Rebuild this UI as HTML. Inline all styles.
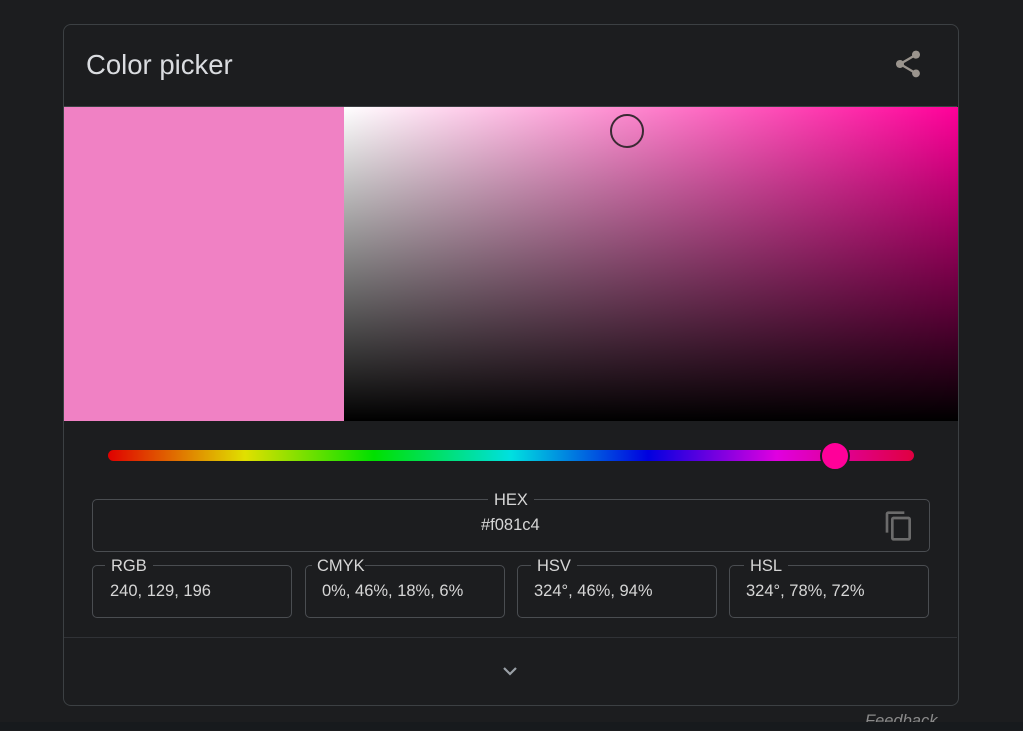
<!DOCTYPE html>
<html><head><style>
body{margin:0;width:1023px;height:730px;background:#1c1d1f;font-family:"Liberation Sans",sans-serif;position:relative;overflow:hidden}
.card{position:absolute;left:63px;top:24px;width:894px;height:680px;border:1px solid #3c4043;border-radius:8px;box-sizing:content-box}
.a{position:absolute}
.box{position:absolute;border:1px solid #4a4d51;border-radius:5px;box-sizing:border-box}
.lbl{position:absolute;top:-9px;background:#1c1d1f;color:#d6d6d6;font-size:16.5px;padding:0 6px;line-height:18px}
.val{position:absolute;color:#d6d6d6;font-size:16.5px}
</style></head><body>
<div class="card"></div>
<div class="a" style="left:86px;top:49px;color:#dadce0;font-size:27.5px">Color picker</div>
<svg class="a" style="left:892px;top:48px" width="32" height="32" viewBox="0 0 24 24"><path fill="#9a948d" d="M18 16.08c-.76 0-1.44.3-1.96.77L8.91 12.7c.05-.23.09-.46.09-.7s-.04-.47-.09-.7l7.05-4.110c.54.5 1.250.81 2.040.81 1.66 0 3-1.34 3-3s-1.34-3-3-3-3 1.34-3 3c0 .24.04.47.09.7L8.04 9.81C7.5 9.31 6.79 9 6 9c-1.66 0-3 1.34-3 3s1.34 3 3 3c.79 0 1.5-.31 2.04-.81l7.12 4.16c-.05.21-.08.43-.08.65 0 1.61 1.31 2.92 2.92 2.92s2.92-1.31 2.92-2.920-1.31-2.92-2.92-2.92z"/></svg>
<div class="a" style="left:64px;top:106px;width:893px;height:1px;background:#3c4043"></div>
<div class="a" style="left:64px;top:107px;width:280px;height:314px;background:#f081c4"></div>
<div class="a" style="left:344px;top:107px;width:614px;height:314px;background:linear-gradient(to bottom,rgba(0,0,0,0),#000),linear-gradient(to right,#fff,#ff0099)"></div>
<div class="a" style="left:610px;top:114px;width:30px;height:30px;border:2px solid #3a2a33;border-radius:50%"></div>
<div class="a" style="left:108px;top:450px;width:806px;height:11px;border-radius:6px;background:linear-gradient(to right,#e00000,#e0e000 17%,#00e000 33%,#00e0e0 50%,#0000e0 67%,#e000e0 83%,#e00040)"></div>
<div class="a" style="left:820px;top:441px;width:30px;height:30px;border-radius:50%;background:#ff0099;border:2px solid #1c1d1f;box-sizing:border-box"></div>
<div class="box" style="left:92px;top:499px;width:838px;height:53px"><span class="lbl" style="left:395px">HEX</span><span class="val" style="left:388px;top:16px">#f081c4</span>
<svg class="a" style="left:790px;top:10px" width="32" height="32" viewBox="0 0 24 24"><path fill="#6b6b6b" d="M16 1H4c-1.1 0-2 .9-2 2v14h2V3h12V1zm3 4H8c-1.1 0-2 .9-2 2v14c0 1.1.9 2 2 2h11c1.1 0 2-.9 2-2V7c0-1.1-.9-2-2-2zm0 16H8V7h11v14z"/></svg></div>
<div class="box" style="left:92px;top:565px;width:200px;height:53px"><span class="lbl" style="left:12px">RGB</span><span class="val" style="left:17px;top:16px">240, 129, 196</span></div>
<div class="box" style="left:305px;top:565px;width:200px;height:53px"><span class="lbl" style="left:6px;padding:0 0 0 5px">CMYK</span><span class="val" style="left:16px;top:16px">0%, 46%, 18%, 6%</span></div>
<div class="box" style="left:517px;top:565px;width:200px;height:53px"><span class="lbl" style="left:13px">HSV</span><span class="val" style="left:16px;top:16px">324°, 46%, 94%</span></div>
<div class="box" style="left:729px;top:565px;width:200px;height:53px"><span class="lbl" style="left:14px">HSL</span><span class="val" style="left:16px;top:16px">324°, 78%, 72%</span></div>
<div class="a" style="left:64px;top:637px;width:893px;height:1px;background:#303236"></div>
<svg class="a" style="left:501px;top:664px" width="18" height="14" viewBox="0 0 18 14"><path d="M3 4l6 6 6-6" stroke="#9aa0a6" stroke-width="2.2" fill="none"/></svg>
<div class="a" style="left:865px;top:712px;color:#8a8a8a;font-size:16.5px;font-style:italic">Feedback</div>
<div class="a" style="left:0;top:722px;width:1023px;height:8px;background:#171a1d"></div>
</body></html>
